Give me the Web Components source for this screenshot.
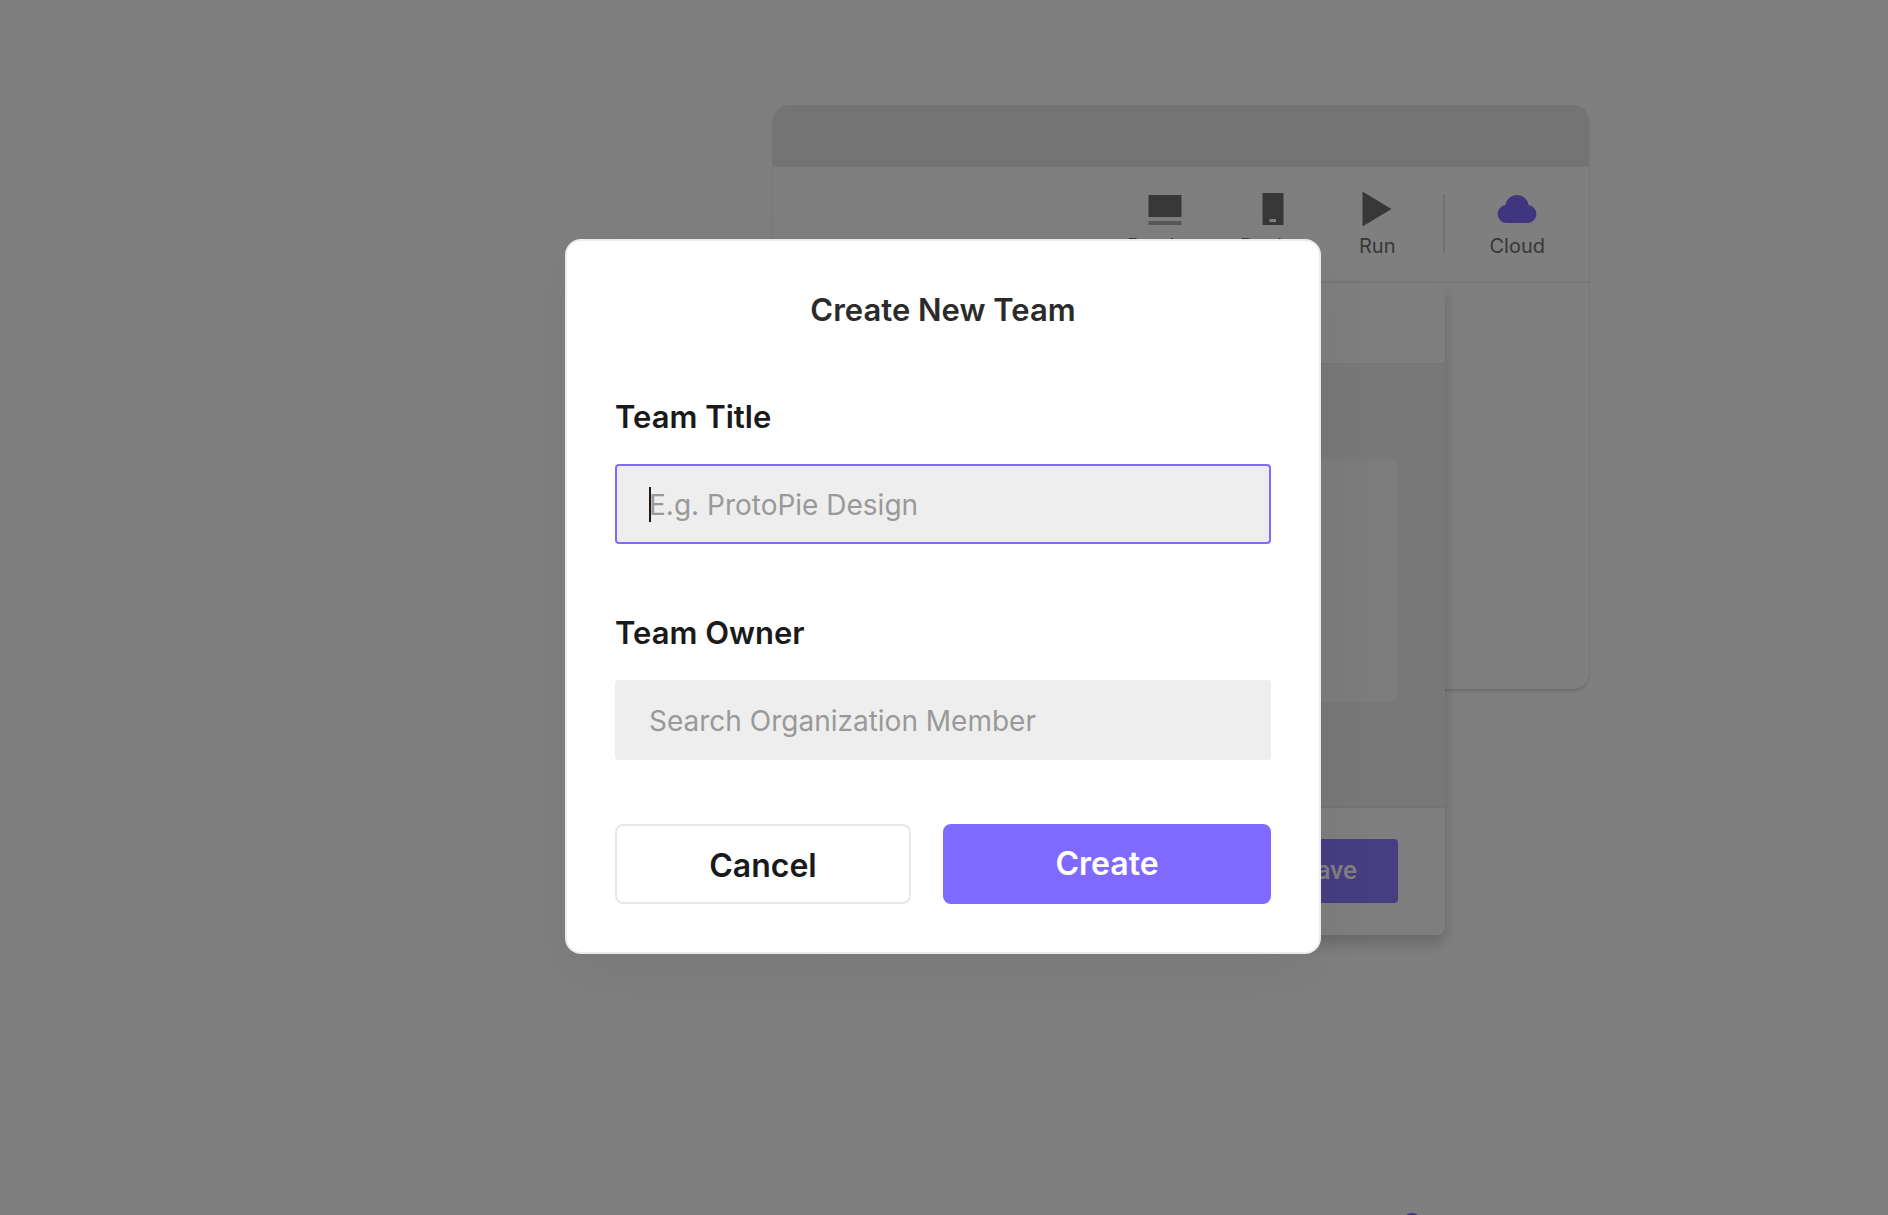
<!DOCTYPE html>
<html lang="en">
<head>
<meta charset="UTF-8">
<meta name="viewport" content="width=device-width, initial-scale=1.0">
<title>Create New Team</title>
<style>
    * {
        box-sizing: border-box;
    }

    body {
        margin: 0;
        min-height: 100vh;
        font-family: Inter, "Liberation Sans", sans-serif;
        background-color: #ffffff;
    }
</style>
</head>
<body>
    <app-stage>
        <app-window slot="backdrop">
            <tool-item slot="tools" icon="preview">Preview</tool-item>
            <tool-item slot="tools" icon="device">Device</tool-item>
            <tool-item slot="tools" icon="run">Run</tool-item>
            <tool-item slot="tools" icon="cloud" divided>Cloud</tool-item>
            <save-panel></save-panel>
        </app-window>

        <team-dialog heading="Create New Team">
            <text-field label="Team Title" placeholder="E.g. ProtoPie Design" active></text-field>
            <text-field label="Team Owner" placeholder="Search Organization Member"></text-field>
            <action-button slot="actions" variant="outline">Cancel</action-button>
            <action-button slot="actions" variant="primary">Create</action-button>
        </team-dialog>
    </app-stage>

<script>
const ICONS = {
    preview: `<svg width="34" height="36" viewBox="0 0 34 36">
        <path fill="#707070" d="M0.5 4h33v22h-33z"/>
        <path fill="#b0b0b0" d="M0.5 30h33v4h-33z"/>
    </svg>`,
    device: `<svg width="22" height="36" viewBox="0 0 22 36">
        <path fill="#707070" d="M0.5 2h21v32h-21z"/>
        <path fill="#ffffff" d="M7.5 28h6.5v3h-6.5z"/>
    </svg>`,
    run: `<svg width="30" height="36" viewBox="0 0 30 36">
        <path fill="#707070" d="M0.5 0.5L29.5 18L0.5 35.5z"/>
    </svg>`,
    cloud: `<svg width="40" height="36" viewBox="0 0 40 36">
        <path fill="#816aff" d="M9 32a9 9 0 0 1-.6-17.9A11.7 11.7 0 0 1 31.6 14.1A9 9 0 0 1 31 32z"/>
    </svg>`
};

class AppStage extends HTMLElement {
    connectedCallback() {
        const shadow = this.attachShadow({mode: "open"});

        shadow.innerHTML = `
            <style>
                :host {
                    display: grid;
                    min-height: 100vh;
                    overflow: hidden;
                }

                /* page, veil and dialog share one grid cell */
                .page, .veil, .front {
                    grid-area: 1 / 1;
                    min-width: 0;
                }

                .page {
                    position: relative;
                    padding: 105px 299px 0 773px;
                }

                .veil {
                    position: relative;
                    background-color: rgba(0, 0, 0, 0.5);
                }

                .front {
                    position: relative;
                    display: flex;
                    justify-content: center;
                    align-items: flex-start;
                    padding-top: 239px;
                    padding-right: 2px;
                }

                .marker {
                    position: absolute;
                    top: calc(100vh - 2px);
                    left: 1402px;
                    width: 20px;
                    height: 20px;
                    border-radius: 50%;
                    background-color: #816aff;
                }
            </style>

            <div class="page">
                <slot name="backdrop"></slot>
                <div class="marker"></div>
            </div>
            <div class="veil"></div>
            <div class="front"><slot></slot></div>
        `;
    }
}

class AppWindow extends HTMLElement {
    connectedCallback() {
        const shadow = this.attachShadow({mode: "open"});

        shadow.innerHTML = `
            <style>
                :host {
                    display: block;
                    position: relative;
                    height: 584px;
                    border-radius: 16px;
                    background-color: #ffffff;
                    box-shadow: 0 2px 3px rgba(0, 0, 0, 0.16);
                }

                .titlebar {
                    height: 62px;
                    border-radius: 16px 16px 0 0;
                    background-color: #e8e8e8;
                }

                .toolbar {
                    box-sizing: border-box;
                    display: flex;
                    justify-content: flex-end;
                    height: 116px;
                    padding: 24px 44px 0 0;
                    border-bottom: 2px solid #f3f3f3;
                }

                ::slotted([icon="device"]) {
                    margin-left: 38px;
                }

                ::slotted([icon="run"]) {
                    margin-left: 54px;
                }

                /* the panel hangs over the window's lower edge */
                .overlay {
                    position: absolute;
                    top: 178px;
                    right: 144px;
                    left: 40px;
                }
            </style>

            <div class="titlebar"></div>
            <div class="toolbar"><slot name="tools"></slot></div>
            <div class="overlay"><slot></slot></div>
        `;
    }
}

class ToolItem extends HTMLElement {
    connectedCallback() {
        const shadow = this.attachShadow({mode: "open"});
        const icon = ICONS[this.getAttribute("icon")];

        shadow.innerHTML = `
            <style>
                :host {
                    display: flex;
                    align-items: flex-start;
                }

                :host([divided]) {
                    margin-left: 48px;
                }

                :host([divided])::before {
                    content: "";
                    width: 2px;
                    height: 59px;
                    margin: 3px 44px 0 0;
                    background-color: #e4e4e4;
                }

                button {
                    display: flex;
                    flex-direction: column;
                    align-items: center;
                    gap: 7px;
                    padding: 0;
                    border: 0;
                    background: none;
                    font: 400 20px/24px Inter, sans-serif;
                    color: #707070;
                }

                svg {
                    display: block;
                    flex-shrink: 0;
                }
            </style>

            <button type="button">${icon}<span><slot></slot></span></button>
        `;
    }
}

class SavePanel extends HTMLElement {
    connectedCallback() {
        const shadow = this.attachShadow({mode: "open"});

        shadow.innerHTML = `
            <style>
                :host {
                    display: block;
                    border-radius: 8px;
                    background-color: #fcfcfc;
                    box-shadow: 0 8px 16px rgba(0, 0, 0, 0.2);
                }

                header {
                    height: 80px;
                    border-bottom: 2px solid #ececec;
                }

                .body {
                    padding: 94px 48px 104px;
                    background-color: #f1f1f1;
                    border-bottom: 2px solid #e8e8e8;
                }

                .card {
                    height: 243px;
                    border-radius: 8px;
                    background-color: #f8f8f8;
                }

                footer {
                    display: flex;
                    justify-content: flex-end;
                    padding: 31px 47px 32px;
                }

                button {
                    height: 64px;
                    padding: 0 41px 2px;
                    border: 0;
                    border-radius: 4px;
                    background-color: #8c7cff;
                    font: 500 26px/32px Roboto, sans-serif;
                    color: #ffffff;
                }
            </style>

            <header></header>
            <div class="body"><div class="card"></div></div>
            <footer><button type="button">Save</button></footer>
        `;
    }
}

class TeamDialog extends HTMLElement {
    connectedCallback() {
        const shadow = this.attachShadow({mode: "open"});

        shadow.innerHTML = `
            <style>
                :host {
                    box-sizing: border-box;
                    width: 40%;
                    min-width: 756px;
                    padding: 49px 48px 48px;
                    border: 2px solid #ececec;
                    border-radius: 16px;
                    background-color: #ffffff;
                    box-shadow: 0 20px 60px rgba(0, 0, 0, 0.05);
                }

                h2 {
                    margin: 0 0 66px;
                    font-weight: 600;
                    font-size: 31px;
                    line-height: 40px;
                    text-align: center;
                    color: #2b2b2b;
                }

                .fields {
                    display: flex;
                    flex-direction: column;
                    gap: 68px;
                }

                .actions {
                    display: flex;
                    gap: 32px;
                    margin-top: 64px;
                }
            </style>

            <form role="dialog" aria-labelledby="heading">
                <h2 id="heading">${this.getAttribute("heading")}</h2>
                <div class="fields"><slot></slot></div>
                <div class="actions"><slot name="actions"></slot></div>
            </form>
        `;
    }
}

class TextField extends HTMLElement {
    connectedCallback() {
        const shadow = this.attachShadow({mode: "open"});

        shadow.innerHTML = `
            <style>
                :host {
                    position: relative;
                    display: flex;
                    flex-direction: column;
                    gap: 27px;
                    padding-top: 1px;
                }

                label {
                    font-weight: 600;
                    font-size: 31px;
                    line-height: 40px;
                    color: #1a1a1a;
                }

                input {
                    box-sizing: border-box;
                    width: 100%;
                    height: 80px;
                    padding: 2px 32px 0;
                    border: 2px solid #eeeeee;
                    border-radius: 4px;
                    outline: none;
                    background-color: #eeeeee;
                    font: 400 28px/36px Inter, sans-serif;
                    color: #1a1a1a;
                }

                input::placeholder {
                    color: #999999;
                    opacity: 1;
                }

                :host([active]) input {
                    border-color: #8069ff;
                }

                .caret {
                    display: none;
                }

                :host([active]) .caret {
                    display: block;
                    position: absolute;
                    bottom: 22px;
                    left: 34px;
                    width: 2px;
                    height: 35px;
                    background-color: #1a1a1a;
                }
            </style>

            <label for="field">${this.getAttribute("label")}</label>
            <input id="field" type="text" placeholder="${this.getAttribute("placeholder")}">
            <span class="caret"></span>
        `;
    }
}

class ActionButton extends HTMLElement {
    connectedCallback() {
        const shadow = this.attachShadow({mode: "open"});

        shadow.innerHTML = `
            <style>
                :host {
                    flex: 328 1 0;
                }

                :host([variant="outline"]) {
                    flex-grow: 296;
                }

                button {
                    box-sizing: border-box;
                    width: 100%;
                    height: 80px;
                    padding: 0;
                    border: 0;
                    border-radius: 8px;
                    background-color: #8069ff;
                    font: 600 32px/40px Inter, sans-serif;
                    color: #ffffff;
                }

                :host([variant="outline"]) button {
                    padding-top: 4px;
                    border: 2px solid #e8e8e8;
                    background-color: #ffffff;
                    color: #1a1a1a;
                }
            </style>

            <button type="button"><slot></slot></button>
        `;
    }
}

customElements.define("app-stage", AppStage);
customElements.define("app-window", AppWindow);
customElements.define("tool-item", ToolItem);
customElements.define("save-panel", SavePanel);
customElements.define("team-dialog", TeamDialog);
customElements.define("text-field", TextField);
customElements.define("action-button", ActionButton);
</script>
</body>
</html>
